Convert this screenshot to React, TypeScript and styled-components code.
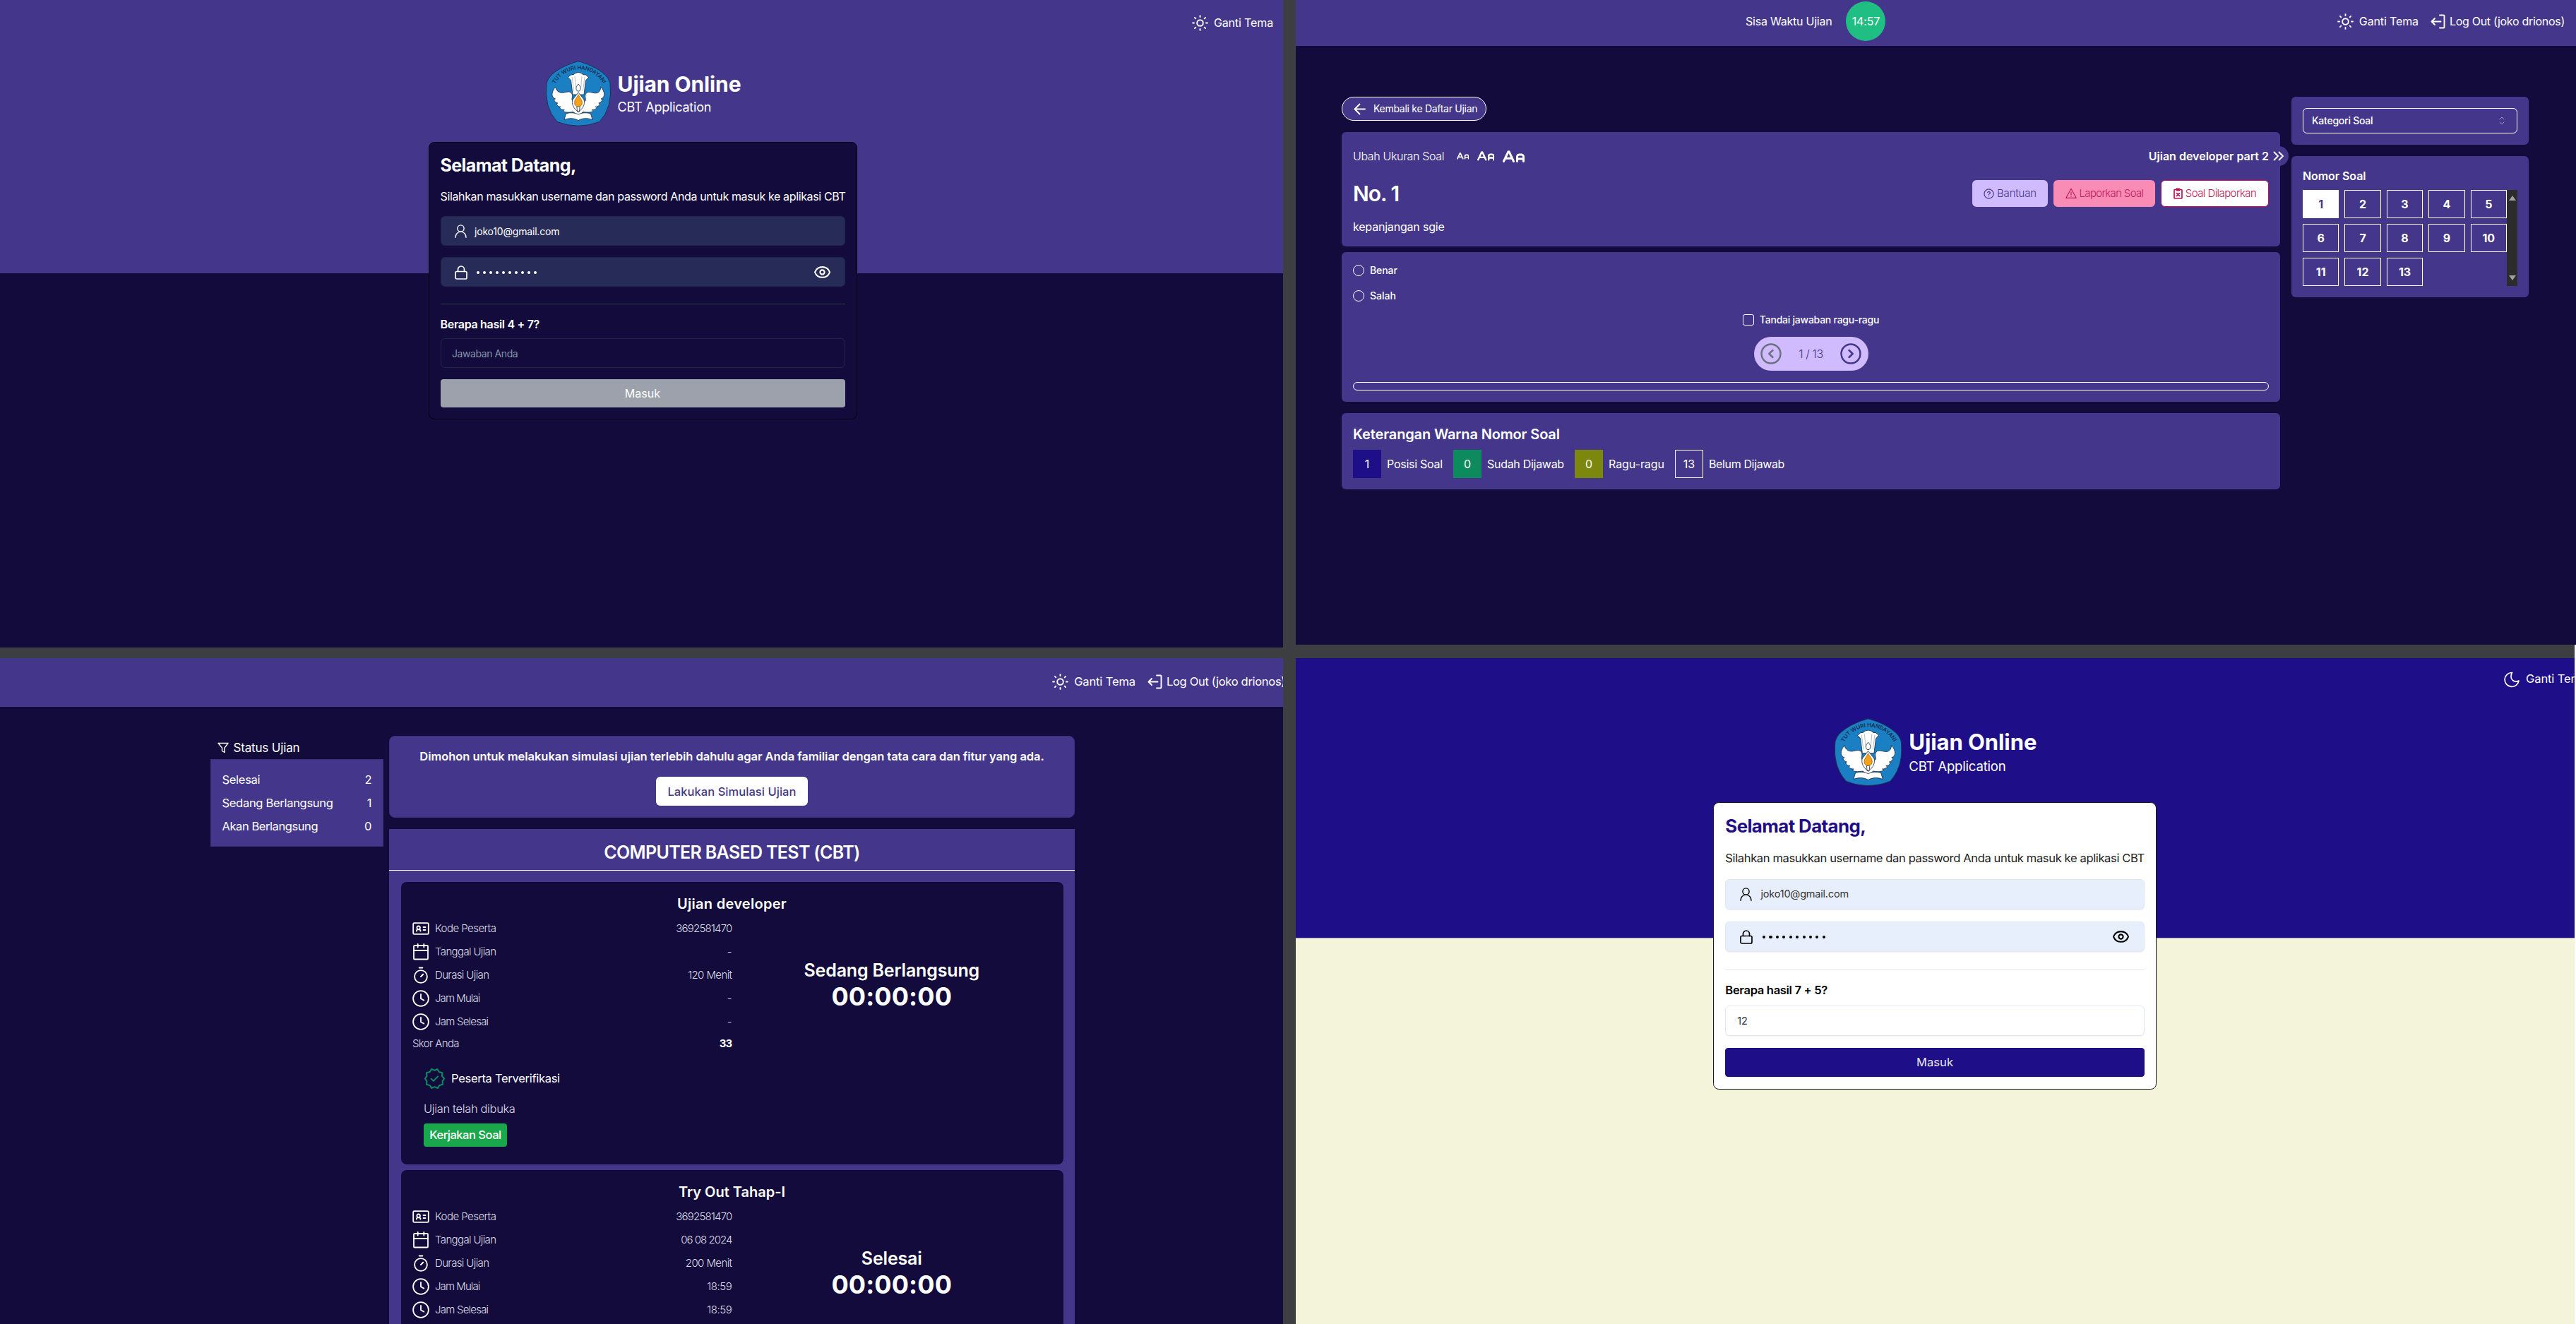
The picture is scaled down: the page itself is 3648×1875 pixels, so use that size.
import React from 'react';
import styled, { createGlobalStyle, css } from 'styled-components';

const INDIGO = '#44378b';
const NIGHT = '#120b3c';
const ROYAL = '#1e0e87';
const LILAC = '#d0bbfe';
const CREAM = '#f4f4db';

const GlobalStyle = createGlobalStyle`
  *, *::before, *::after { box-sizing: border-box; }
  body { margin: 0; background: #3d3e41; }
  #root { font-family: Inter, "Noto Sans", sans-serif; color: #fff; }
  button { font: inherit; border: 0; margin: 0; padding: 0; color: inherit; }
`;

/* ---------- shell ---------- */

const Board = styled.main`
  display: flex;
  gap: 18px;
  width: 3648px;
  height: 1875px;
  overflow: hidden;
  background: #3d3e41;
`;

const Column = styled.div<{ $width: number }>`
  display: flex;
  flex-direction: column;
  flex: none;
  width: ${(p) => p.$width}px;
`;

const Divider = styled.div<{ $height: number; $edge?: boolean }>`
  flex: none;
  height: ${(p) => p.$height}px;
  ${(p) => p.$edge && css`border-right: 2px solid #fff;`}
`;

const Screen = styled.section<{ $height: number }>`
  flex: none;
  height: ${(p) => p.$height}px;
  overflow: hidden;
  background: ${NIGHT};
`;

const Text = styled.span<{
  $size?: number;
  $weight?: number;
  $ls?: number;
  $lh?: number;
  $color?: string;
}>`
  display: block;
  white-space: nowrap;
  font-size: ${(p) => p.$size ?? 16}px;
  font-weight: ${(p) => p.$weight ?? 400};
  letter-spacing: ${(p) => p.$ls ?? 0}em;
  line-height: ${(p) => p.$lh ?? 24}px;
  color: ${(p) => p.$color ?? 'inherit'};
`;

/* ---------- icons ---------- */

type IconProps = {
  w: number;
  h?: number;
  box?: string;
  stroke?: number;
  color?: string;
  children: React.ReactNode;
};

const Glyph = styled.svg`
  display: block;
  flex: none;
`;

const Icon = ({ w, h = w, box = '0 0 24 24', stroke = 1.7, color = 'currentColor', children }: IconProps) => (
  <Glyph
    width={w}
    height={h}
    viewBox={box}
    fill="none"
    stroke={color}
    strokeWidth={stroke}
    strokeLinecap="round"
    strokeLinejoin="round"
  >
    {children}
  </Glyph>
);

const SunIcon = () => (
  <Icon w={23} box="-11.5 -11.5 23 23" stroke={1.9}>
    <circle r="4.3" />
    <path d="M0-10.4v1.9M0 8.5v1.9M-10.4 0h1.9M8.5 0h1.9M-7.6-7.6l1.4 1.4M6.2 6.2l1.4 1.4M-7.6 7.6l1.4-1.4M6.2-6.2l1.4-1.4" />
  </Icon>
);

const MoonIcon = () => (
  <Icon w={24} stroke={1.7}>
    <path d="M12.5 2.5A10 10 0 1 0 22 14c-1.2.8-2.6 1.2-4 1.2a7 7 0 0 1-7-7c0-2.1.5-4.1 1.5-5.7z" />
  </Icon>
);

const LogoutIcon = () => (
  <Icon w={21} box="0 0 21 21" stroke={1.9}>
    <path d="M13 1.5h5.5a1 1 0 0 1 1 1v16a1 1 0 0 1-1 1H13M14.5 10.5H1.5M6 6l-4.5 4.5L6 15" />
  </Icon>
);

const UserIcon = () => (
  <Icon w={17} h={19} box="0 0 17 19" stroke={1.4}>
    <circle cx="8.5" cy="5.5" r="4.6" />
    <path d="M1 18.2c0-4.5 3.2-8.1 7.5-8.1s7.5 3.6 7.5 8.1" />
  </Icon>
);

const LockIcon = () => (
  <Icon w={18} h={20} box="0 0 18 20" stroke={1.7}>
    <rect x="1" y="8.5" width="16" height="10.5" rx="1.8" />
    <path d="M4.5 8.3V5.5a4.5 4.5 0 0 1 9 0v2.8" />
  </Icon>
);

const EyeIcon = () => (
  <Icon w={25} stroke={2}>
    <path d="M2.1 12.3a1 1 0 0 1 0-.7 10.75 10.75 0 0 1 19.9 0 1 1 0 0 1 0 .7 10.75 10.75 0 0 1-19.9 0" />
    <circle cx="12" cy="12" r="3" />
  </Icon>
);

const CardIdIcon = () => (
  <Icon w={24} stroke={1.8}>
    <rect x="1.2" y="4.2" width="21.6" height="15.6" rx="1.6" />
    <path d="M6 15.6v-1.2l1.7-1.5a2.3 2.3 0 1 1 2 0l1.7 1.5v1.2M7.2 13.4h3" strokeWidth="1.9" />
    <path d="M15.5 10h3M15.5 14h3" />
  </Icon>
);

const CalendarIcon = () => (
  <Icon w={24} stroke={1.8}>
    <rect x="2" y="3" width="20" height="19.5" rx="1.3" />
    <path d="M2 10h20M7.7 1v4.5M16.3 1v4.5" />
  </Icon>
);

const StopwatchIcon = () => (
  <Icon w={24} stroke={1.8}>
    <circle cx="12" cy="14" r="8.9" />
    <path d="M9.7 1.6h4.6M12 14l3.2-3.2" strokeWidth="2" />
  </Icon>
);

const ClockIcon = () => (
  <Icon w={24} stroke={1.8}>
    <circle cx="12" cy="12" r="10.9" />
    <path d="M12 6v6.2l4.3 2.4" />
  </Icon>
);

const VerifiedIcon = () => (
  <Icon w={31} stroke={1.6} color="#0e8a5f">
    <path d="M22.5 12l-2.44-2.78.34-3.68-3.61-.82-1.89-3.18L12 3 8.6 1.54 6.71 4.72l-3.61.81.34 3.68L1.5 12l1.94 2.78-.34 3.69 3.61.82 1.89 3.18L12 21l3.4 1.46 1.89-3.18 3.61-.82-.34-3.68L22.5 12z" />
    <path d="M8.3 12.2l2.4 2.4 4.9-5" />
  </Icon>
);

const FunnelIcon = () => (
  <Icon w={16} box="0 0 16 16" stroke={1.4}>
    <path d="M1 1.5h14l-5 6.6v6.4l-3.5-2V8.1z" />
  </Icon>
);

const ArrowLeftIcon = () => (
  <Icon w={17} box="0 0 17 17" stroke={1.9}>
    <path d="M16 8.5H1.5M8.5 1.5l-7 7 7 7" />
  </Icon>
);

const ChevronsIcon = () => (
  <Icon w={16} h={14} box="0 0 16 14" stroke={1.8}>
    <path d="M1.5 1.5L7 7l-5.5 5.5M8.5 1.5L14 7l-5.5 5.5" />
  </Icon>
);

const HelpIcon = () => (
  <Icon w={15} stroke={1.9}>
    <circle cx="12" cy="12" r="10.5" />
    <path d="M9.09 9a3 3 0 0 1 5.83 1c0 2-3 2.5-3 4M12 17.5h.01" />
  </Icon>
);

const WarningIcon = () => (
  <Icon w={16} stroke={1.7}>
    <path d="M12 2L1.2 21.5h21.6zM12 9v6.5M12 18.5h.01" />
  </Icon>
);

const ClipboardXIcon = () => (
  <Icon w={13} h={16} box="0 0 13 16" stroke={1.7}>
    <rect x="1" y="2.5" width="11" height="12.5" rx="1" />
    <rect x="4" y="1" width="5" height="3" rx=".6" fill="currentColor" strokeWidth="1" />
    <path d="M4.6 7.6l3.8 3.8M8.4 7.6l-3.8 3.8" />
  </Icon>
);

const ChevronCircle = ({ dir, color }: { dir: 'left' | 'right'; color: string }) => (
  <Icon w={30} box="0 0 30 30" stroke={2.5} color={color}>
    <circle cx="15" cy="15" r="13.5" />
    <path d={dir === 'left' ? 'M17.5 10L12.3 15l5.2 5' : 'M12.5 10l5.2 5-5.2 5'} />
  </Icon>
);

const SelectChevrons = () => (
  <Icon w={8} h={12} box="0 0 8 12" stroke={1} color="#a59ccb">
    <path d="M1 4l3-3 3 3M1 8l3 3 3-3" />
  </Icon>
);

const LetterSizeIcon = ({ width }: { width: number }) => (
  <Icon w={width} h={(width * 17) / 31} box="0 0 31 17" stroke={3}>
    <path d="M1.5 15.5L8 1.7h1l6.5 13.8M4 11.3h9" />
    <path d="M20.5 15.5V9a3 3 0 0 1 3-3h3a3 3 0 0 1 3 3v6.5M20.5 12h9" />
  </Icon>
);

/* Emblem of the ministry: blue shield, white bird, torch and open book */
const Emblem = ({ size, id }: { size: number; id: string }) => (
  <Glyph width={size} height={(size * 93) / 92} viewBox="0 0 92 93">
    <path
      d="M46 .7C58 4 73 10 84 20Q89 25 91 31.5Q95 66 76 86.5Q46 98 16 86.5Q-3 66 1 31.5Q3 25 8 20C19 10 34 4 46 .7Z"
      fill="#1b7fc4"
      stroke="#1c2f55"
      strokeWidth="1"
    />
    <path id={id} d="M13.2 33A38 38 0 0 1 81.5 34" fill="none" />
    <text fontSize="7.6" fontFamily="Inter, sans-serif" fontWeight="500" fill="#10243f">
      <textPath href={`#${id}`} textLength="83" startOffset="0">
        TUT WURI HANDAYANI
      </textPath>
    </text>
    <g fill="#fff" stroke="#17293f" strokeWidth=".8" strokeLinejoin="round">
      <path d="M31.5 23.5l4-3.5 3.5-.3 3-2.2 4-1 4 1 3 2.2 3.5.3 4 3.5-4 4.5L54 48H38L35.5 28z" />
      <path d="M13.8 37C11 40 8.5 45 9 49c.8 3 2.6 4.3 4.6 5-1 .7-1.5.5-2.3.5 1 3.5 3 5 5.5 5.5l-2 .8c1.5 3.2 3.5 4.5 6.5 4.5l-2 1.2c2 2.5 4 3.3 7 3l-2 1.8c4 2.5 9 1.8 14.5 1.2l7 5.5 7-5.5c5.5.6 10.5 1.3 14.5-1.2l-2-1.8c3 .3 5-.5 7-3l-2-1.2c3 0 5-1.3 6.5-4.5l-2-.8c2.5-.5 4.5-2 5.5-5.5-.8 0-1.3.2-2.3-.5 2-.7 3.8-2 4.6-5 .5-4-2-9-4.8-12-.3 4.5-1.5 7.5-5.5 8.7-4 .8-8-1.5-11.5-1.2-3.5.3-5.5 3-5 7 .3 2 1 4 0 5.5L46 60l-8.5-3.5c-1-1.5-.3-3.5 0-5.5.5-4-1.5-6.7-5-7-3.5-.3-7.5 2-11.5 1.2-4-1.2-6.9-3.7-7.2-8.2z" />
      <path d="M46 45l-8 10c-2 6 1 12 8 18 7-6 10-12 8-18z" />
      <path d="M26 83.5l2.5-8.5c6-2 12-1.5 17.5 1 5.5-2.5 11.5-3 17.5-1l2.5 8.5c-7-2.5-14-2.5-20 1-6-3.5-13-3.5-20-1z" />
      <path d="M46 33c-3.5 4-4 7-1.5 10h3c2.5-3 2-6-1.5-10z" />
      <path d="M43.8 65h4.4l-.8 7h-2.8z" />
    </g>
    <path d="M41 22l1.5 18M51 22l-1.5 18M37 23l2.5 20M55 23l-2.5 20" stroke="#8b97a6" strokeWidth=".6" />
    <path
      d="M46 48c-1.5 4-5.5 7-5.5 11.5 0 3.5 2.5 5.5 5.5 5.5s5.5-2 5.5-5.5C51.5 55 47.5 52 46 48z"
      fill="#f3a21a"
      stroke="#9a5a10"
      strokeWidth=".7"
    />
  </Glyph>
);

/* ---------- top bars ---------- */

const TopBar = styled.header<{ $height: number; $lift?: number }>`
  display: flex;
  align-items: center;
  height: ${(p) => p.$height}px;
  padding-bottom: ${(p) => p.$lift ?? 0}px;
  background: ${INDIGO};
`;

const Actions = styled.div<{ $right: number; $gap?: number }>`
  display: flex;
  align-items: center;
  gap: ${(p) => p.$gap ?? 17}px;
  margin-left: auto;
  margin-right: ${(p) => p.$right}px;
`;

const Action = styled.a<{ $gap: number }>`
  display: flex;
  align-items: center;
  gap: ${(p) => p.$gap}px;
`;

const Timer = styled.div`
  display: flex;
  align-items: center;
  gap: 20px;
  margin-left: 637px;
`;

const TimerBadge = styled.div`
  display: flex;
  align-items: center;
  justify-content: center;
  width: 56px;
  height: 56px;
  border-radius: 50%;
  background: #1fbf83;
`;

const SessionActions = ({ right, size }: { right: number; size: number }) => (
  <Actions $right={right}>
    <Action $gap={8}>
      <SunIcon />
      <Text $size={size} $ls={-0.008}>Ganti Tema</Text>
    </Action>
    <Action $gap={6}>
      <LogoutIcon />
      <Text $size={size} $ls={-0.0185}>Log Out (joko drionos)</Text>
    </Action>
  </Actions>
);

/* ---------- login ---------- */

/* Every length of the login screen is a multiple of --u, its zoom level. */
const u = (n: number) => `calc(var(--u) * ${n}px)`;

const LoginScreen = styled.section<{ $zoom: number; $light?: boolean; $height: number; $band: number; $shift: number }>`
  --u: ${(p) => p.$zoom};
  display: flex;
  flex-direction: column;
  align-items: center;
  flex: none;
  height: ${(p) => p.$height}px;
  overflow: hidden;
  padding-left: ${(p) => Math.max(0, p.$shift)}px;
  padding-right: ${(p) => Math.max(0, -p.$shift)}px;
  background: ${(p) =>
    p.$light
      ? `linear-gradient(${ROYAL} ${p.$band}px, #a9a4c4 ${p.$band}px, #a9a4c4 ${p.$band + 1}px, ${CREAM} ${p.$band + 1}px)`
      : `linear-gradient(${INDIGO} ${p.$band}px, ${NIGHT} ${p.$band}px)`};
  ${(p) => p.$light && css`border-right: 2px solid #fff;`}
`;

const LoginBar = styled.header<{ $height: number; $lift: number }>`
  display: flex;
  align-items: center;
  flex: none;
  align-self: stretch;
  height: ${(p) => p.$height}px;
  padding-bottom: ${(p) => p.$lift}px;
`;

const LoginText = styled.span<{ $size: number; $weight?: number; $ls?: number; $lh?: number; $color?: string }>`
  display: block;
  white-space: nowrap;
  font-size: ${(p) => u(p.$size)};
  font-weight: ${(p) => p.$weight ?? 400};
  letter-spacing: ${(p) => p.$ls ?? 0}em;
  line-height: ${(p) => u(p.$lh ?? 24)};
  color: ${(p) => p.$color ?? 'inherit'};
`;

const Brand = styled.div`
  display: flex;
  align-items: center;
  flex: none;
  gap: ${u(10)};
  height: ${u(93)};
  margin-top: ${u(22)};
  padding-left: 2px;
`;

const BrandName = styled.div`
  padding-top: ${u(2)};
`;

const LoginCard = styled.form<{ $light?: boolean }>`
  display: flex;
  flex-direction: column;
  flex: none;
  width: ${u(607)};
  height: ${u(393)};
  margin-top: ${u(22)};
  padding: ${u(16)};
  border: 1px solid ${(p) => (p.$light ? '#15151c' : '#04020f')};
  border-radius: ${u(8)};
  background: ${(p) => (p.$light ? '#fff' : NIGHT)};
  color: ${(p) => (p.$light ? '#000' : '#fff')};
`;

const Field = styled.label<{ $light?: boolean; $filled?: boolean; $top: number }>`
  display: flex;
  align-items: center;
  flex: none;
  height: ${u(41.7)};
  margin-top: ${(p) => u(p.$top)};
  padding: 1px ${(p) => (p.$filled ? u(19) : u(15.5))} 0;
  border: 1px solid ${(p) => (p.$light ? '#e0e7f3' : '#1f2745')};
  border-radius: ${u(6)};
  background: ${(p) => (p.$filled ? (p.$light ? '#e8effc' : '#262b57') : 'transparent')};
  box-shadow: ${(p) => (p.$light ? '0 1px 2px rgba(0, 0, 0, 0.06)' : 'none')};
`;

const FieldIcon = styled.span`
  display: flex;
  width: ${u(28.5)};
`;

const Dots = styled.span`
  display: flex;
  gap: ${u(5.1)};
  padding-left: ${u(2.5)};
`;

const Dot = styled.i`
  width: ${u(4)};
  height: ${u(4)};
  border-radius: 50%;
  background: currentColor;
`;

const Reveal = styled.span`
  margin-left: auto;
`;

const Rule = styled.hr<{ $light?: boolean }>`
  flex: none;
  width: 100%;
  height: 1px;
  margin: ${u(24)} 0 ${u(16)};
  border: 0;
  background: ${(p) => (p.$light ? '#e2e4ea' : '#343f4e')};
`;

const Gap = styled.div<{ $h: number }>`
  flex: none;
  height: ${(p) => u(p.$h)};
`;

const Submit = styled.button<{ $light?: boolean }>`
  display: flex;
  align-items: center;
  justify-content: center;
  flex: none;
  height: ${u(40)};
  margin-top: ${u(16)};
  padding-top: 1px;
  border-radius: ${u(4)};
  background: ${(p) => (p.$light ? ROYAL : '#9ca1ac')};
  color: ${(p) => (p.$light ? '#e9e7f3' : '#fff')};
`;

type LoginProps = {
  light?: boolean;
  zoom: number;
  height: number;
  band: number;
  shift: number;
  question: string;
  answer?: string;
};

const Login = ({ light, zoom, height, band, shift, question, answer }: LoginProps) => (
  <LoginScreen $light={light} $zoom={zoom} $height={height} $band={band} $shift={shift}>
    <LoginBar $height={light ? 62 : 64} $lift={light ? 3 : 0}>
      <Actions $right={light ? -19 : 14}>
        <Action $gap={8}>
          {light ? <MoonIcon /> : <SunIcon />}
          <LoginText $size={16} $ls={-0.008}>Ganti Tema</LoginText>
        </Action>
      </Actions>
    </LoginBar>
    <Brand>
      <Emblem size={92 * zoom} id={light ? 'motto-light' : 'motto-dark'} />
      <BrandName>
        <LoginText $size={30} $weight={700} $ls={-0.003} $lh={36}>Ujian Online</LoginText>
        <LoginText $size={18} $ls={-0.0126} $lh={29}>CBT Application</LoginText>
      </BrandName>
    </Brand>
    <LoginCard $light={light}>
      <LoginText $size={25} $weight={700} $ls={-0.0234} $lh={32} $color={light ? ROYAL : undefined}>
        Selamat Datang,
      </LoginText>
      <Gap $h={16} />
      <LoginText $size={16} $ls={-0.0228} $color={light ? '#222' : undefined}>
        Silahkan masukkan username dan password Anda untuk masuk ke aplikasi CBT
      </LoginText>
      <Field $light={light} $filled $top={16.3}>
        <FieldIcon><UserIcon /></FieldIcon>
        <LoginText $size={14} $ls={-0.0136} $color={light ? '#333' : undefined}>joko10@gmail.com</LoginText>
      </Field>
      <Field $light={light} $filled $top={16.3}>
        <FieldIcon><LockIcon /></FieldIcon>
        <Dots>
          {Array.from({ length: 10 }, (_, i) => <Dot key={i} />)}
        </Dots>
        <Reveal><EyeIcon /></Reveal>
      </Field>
      <Rule $light={light} />
      <LoginText $size={16} $weight={600} $ls={-0.0194} $lh={24.3}>{question}</LoginText>
      <Field $light={light} $top={8}>
        <LoginText $size={14} $ls={answer ? -0.02 : -0.0302} $color={answer ? '#333' : '#8593ab'}>
          {answer ?? 'Jawaban Anda'}
        </LoginText>
      </Field>
      <Submit $light={light} type="button">
        <LoginText $size={16} $ls={0.004}>Masuk</LoginText>
      </Submit>
    </LoginCard>
  </LoginScreen>
);

/* ---------- question screen ---------- */

const QuestionLayout = styled.div`
  display: grid;
  grid-template-columns: 1329px 336px;
  column-gap: 16px;
  align-items: start;
  padding: 72px 0 0 65px;
`;

const Stack = styled.div`
  display: flex;
  flex-direction: column;
  align-items: flex-start;
`;

const BackButton = styled.button`
  display: flex;
  align-items: center;
  gap: 11px;
  width: 205px;
  height: 34px;
  margin-bottom: 16px;
  padding-left: 16px;
  border: 1px solid #fff;
  border-radius: 17px;
  background: ${INDIGO};
`;

const Card = styled.section<{ $height: number; $gap?: number; $pad: string }>`
  position: relative;
  align-self: stretch;
  height: ${(p) => p.$height}px;
  margin-bottom: ${(p) => p.$gap ?? 0}px;
  padding: ${(p) => p.$pad};
  border-radius: 6px;
  background: ${INDIGO};
`;

const Row = styled.div<{ $gap?: number; $height?: number; $top?: number; $center?: boolean }>`
  display: flex;
  align-items: center;
  justify-content: ${(p) => (p.$center ? 'center' : 'flex-start')};
  gap: ${(p) => p.$gap ?? 0}px;
  height: ${(p) => (p.$height ? `${p.$height}px` : 'auto')};
  margin-top: ${(p) => p.$top ?? 0}px;
`;

const SizePicker = styled.div`
  display: flex;
  align-items: center;
  gap: 11.5px;
  margin-left: 17.5px;
`;

const End = styled.div`
  display: flex;
  gap: 8px;
  margin-left: auto;
`;

const CollapseTab = styled.div`
  position: absolute;
  top: 20px;
  right: -12px;
  display: flex;
  align-items: center;
  width: 28px;
  height: 28px;
  padding-left: 6px;
  border-radius: 0 14px 14px 0;
  background: ${INDIGO};
`;

const tones = {
  help: css`background: ${LILAC}; color: ${INDIGO};`,
  report: css`background: #f98cb5; color: #be1a5c;`,
  reported: css`background: #fff; color: #be1250; border: 1px solid #be1250;`,
};

const ToolButton = styled.button<{ $tone: keyof typeof tones; $width: number }>`
  display: flex;
  align-items: center;
  justify-content: center;
  gap: 4px;
  width: ${(p) => p.$width}px;
  height: 38px;
  border-radius: 6px;
  ${(p) => tones[p.$tone]}
`;

const Radio = styled.span`
  width: 16px;
  height: 16px;
  border: 1px solid #fff;
  border-radius: 50%;
`;

const Checkbox = styled.span`
  width: 16px;
  height: 16px;
  border: 1px solid #fff;
  border-radius: 3px;
`;

const Pager = styled.nav`
  display: flex;
  align-items: center;
  justify-content: space-between;
  width: 162px;
  height: 48px;
  margin: 16px auto;
  padding: 0 9px;
  border-radius: 24px;
  background: ${LILAC};
`;

const Progress = styled.div`
  height: 12px;
  border: 1px solid #fff;
  border-radius: 6px;
`;

const Legend = styled.div`
  display: flex;
  gap: 16px;
  margin-top: 8px;
`;

const LegendItem = styled.div<{ $width: number }>`
  display: flex;
  align-items: center;
  gap: 8px;
  width: ${(p) => p.$width}px;
`;

const Swatch = styled.span<{ $bg?: string }>`
  display: flex;
  align-items: center;
  justify-content: center;
  flex: none;
  width: 40px;
  height: 40px;
  border: 1px solid ${(p) => p.$bg ?? '#fff'};
  background: ${(p) => p.$bg ?? 'transparent'};
`;

const Select = styled.div`
  display: flex;
  align-items: center;
  justify-content: space-between;
  height: 36px;
  padding: 0 17px 0 12px;
  border: 1px solid #fff;
  border-radius: 6px;
`;

const NumberArea = styled.div`
  display: flex;
  height: 136px;
  margin-top: 8px;
`;

const NumberGrid = styled.div`
  display: grid;
  grid-template-columns: repeat(5, 1fr);
  grid-auto-rows: 40px;
  gap: 8px;
  flex: 1;
`;

const NumberCell = styled.button<{ $active: boolean }>`
  border: 1px solid #fff;
  background: ${(p) => (p.$active ? '#fff' : 'transparent')};
  color: ${(p) => (p.$active ? INDIGO : '#fff')};
  font-size: 16px;
  font-weight: 700;
`;

const Scrollbar = styled.div`
  display: flex;
  flex-direction: column;
  justify-content: space-between;
  align-items: center;
  width: 15px;
  padding: 8px 0;
  background: #2c2c2c;
`;

const Caret = styled.i<{ $down?: boolean }>`
  border: 5px solid transparent;
  ${(p) =>
    p.$down
      ? css`border-top: 7px solid #9f9f9f; border-bottom: 0;`
      : css`border-bottom: 7px solid #9f9f9f; border-top: 0;`}
`;

const legend = [
  { count: '1', label: 'Posisi Soal', bg: ROYAL, ls: -0.016, width: 126 },
  { count: '0', label: 'Sudah Dijawab', bg: '#0e8a5f', ls: -0.018, width: 156 },
  { count: '0', label: 'Ragu-ragu', bg: '#7b880d', ls: -0.004, width: 126 },
  { count: '13', label: 'Belum Dijawab', ls: -0.023, width: 156 },
];

const Question = () => (
  <Screen $height={913}>
    <TopBar $height={65} $lift={5}>
      <Timer>
        <Text $ls={-0.0142}>Sisa Waktu Ujian</Text>
        <TimerBadge><Text $ls={-0.0099}>14:57</Text></TimerBadge>
      </Timer>
      <SessionActions right={16} size={16} />
    </TopBar>
    <QuestionLayout>
      <Stack>
        <BackButton>
          <ArrowLeftIcon />
          <Text $size={14} $ls={-0.0202}>Kembali ke Daftar Ujian</Text>
        </BackButton>
        <Card $height={162} $gap={8} $pad="20px 16px 16px">
          <Row $height={28}>
            <Text $weight={300} $ls={-0.0215}>Ubah Ukuran Soal</Text>
            <SizePicker>
              <LetterSizeIcon width={17.5} />
              <LetterSizeIcon width={24.5} />
              <LetterSizeIcon width={31} />
            </SizePicker>
            <End><Text $weight={600}>Ujian developer part 2</Text></End>
          </Row>
          <CollapseTab><ChevronsIcon /></CollapseTab>
          <Row $height={38} $top={20}>
            <Text $size={30} $weight={600} $ls={-0.034}>No. 1</Text>
            <End>
              <ToolButton $tone="help" $width={107}>
                <HelpIcon />
                <Text $size={15} $weight={300} $ls={-0.0127}>Bantuan</Text>
              </ToolButton>
              <ToolButton $tone="report" $width={144}>
                <WarningIcon />
                <Text $size={15} $weight={300} $ls={-0.0451}>Laporkan Soal</Text>
              </ToolButton>
              <ToolButton $tone="reported" $width={153}>
                <ClipboardXIcon />
                <Text $size={15} $weight={300} $ls={-0.0383}>Soal Dilaporkan</Text>
              </ToolButton>
            </End>
          </Row>
          <Row $top={16}><Text $ls={-0.012}>kepanjangan sgie</Text></Row>
        </Card>
        <Card $height={212} $gap={16} $pad="18px 16px 16px">
          <Row $gap={8} $height={16}>
            <Radio />
            <Text $size={14} $weight={500} $ls={-0.0066}>Benar</Text>
          </Row>
          <Row $gap={8} $height={16} $top={20}>
            <Radio />
            <Text $size={14} $weight={500}>Salah</Text>
          </Row>
          <Row $gap={8} $height={16} $top={18} $center>
            <Checkbox />
            <Text $size={14} $weight={500} $ls={-0.0171}>Tandai jawaban ragu-ragu</Text>
          </Row>
          <Pager>
            <ChevronCircle dir="left" color="#6b7280" />
            <Text $weight={300} $ls={-0.0252} $color={INDIGO}>1 / 13</Text>
            <ChevronCircle dir="right" color={INDIGO} />
          </Pager>
          <Progress />
        </Card>
        <Card $height={108} $pad="16px">
          <Text $size={20} $weight={600} $ls={-0.0075} $lh={28}>Keterangan Warna Nomor Soal</Text>
          <Legend>
            {legend.map((item) => (
              <LegendItem key={item.label} $width={item.width}>
                <Swatch $bg={item.bg}><Text>{item.count}</Text></Swatch>
                <Text $ls={item.ls}>{item.label}</Text>
              </LegendItem>
            ))}
          </Legend>
        </Card>
      </Stack>
      <Stack>
        <Card $height={68} $gap={16} $pad="16px">
          <Select>
            <Text $size={14} $weight={500} $ls={-0.018}>Kategori Soal</Text>
            <SelectChevrons />
          </Select>
        </Card>
        <Card $height={200} $pad="16px">
          <Text $weight={600} $ls={-0.0042}>Nomor Soal</Text>
          <NumberArea>
            <NumberGrid>
              {Array.from({ length: 13 }, (_, i) => (
                <NumberCell key={i} $active={i === 0}>{i + 1}</NumberCell>
              ))}
            </NumberGrid>
            <Scrollbar>
              <Caret />
              <Caret $down />
            </Scrollbar>
          </NumberArea>
        </Card>
      </Stack>
    </QuestionLayout>
  </Screen>
);

/* ---------- exam list ---------- */

const ExamLayout = styled.div`
  display: grid;
  grid-template-columns: 245px 971px;
  column-gap: 8px;
  align-items: start;
  padding: 41px 0 0 298px;
`;

const StatusTitle = styled.h2`
  display: flex;
  align-items: center;
  gap: 7px;
  height: 33px;
  margin: 0;
  padding-left: 9.5px;
`;

const StatusBox = styled.ul`
  height: 124px;
  margin: 0;
  padding: 11.5px 15.5px;
  list-style: none;
  border: 1px solid #3a2f7b;
  background: ${INDIGO};
`;

const StatusItem = styled.li`
  display: flex;
  align-items: center;
  justify-content: space-between;
  height: 33px;
`;

const Notice = styled.section`
  display: flex;
  flex-direction: column;
  align-items: center;
  height: 116px;
  margin-bottom: 16px;
  padding-top: 15.5px;
  border: 1px solid #3a2f7b;
  border-radius: 8px;
  background: ${INDIGO};
`;

const NoticeButton = styled.button`
  display: flex;
  align-items: center;
  justify-content: center;
  width: 215.5px;
  height: 41px;
  margin-top: 16.5px;
  border-radius: 6px;
  background: #fff;
  color: ${INDIGO};
`;

const ExamSection = styled.section`
  background: ${INDIGO};
`;

const SectionTitle = styled.h1`
  display: flex;
  justify-content: center;
  height: 59px;
  margin: 0;
  padding-top: 8px;
  border-bottom: 1px solid #fff;
`;

const ExamList = styled.div`
  display: flex;
  flex-direction: column;
  gap: 8px;
  padding: 16px 16.5px 0;
`;

const ExamCard = styled.article`
  height: 400px;
  padding: 17px 16.5px;
  border-radius: 8px;
  background: ${NIGHT};
`;

const ExamName = styled.div`
  display: flex;
  justify-content: center;
`;

const ExamBody = styled.div`
  display: grid;
  grid-template-columns: 1fr 1fr;
  padding-top: 4.5px;
`;

const Detail = styled.div<{ $height?: number }>`
  display: flex;
  align-items: center;
  gap: 8px;
  height: ${(p) => p.$height ?? 33}px;
  color: #dddbe8;
`;

const DetailIcon = styled.span`
  color: #fff;
`;

const DetailValue = styled.div`
  margin-left: auto;
`;

const Countdown = styled.div`
  display: flex;
  flex-direction: column;
  align-items: center;
  padding-top: 57.5px;
`;

const Verified = styled.div`
  display: flex;
  align-items: center;
  gap: 8.5px;
  height: 29px;
  margin: 20px 0 16.5px 15.5px;
`;

const Opened = styled.div`
  padding-left: 16px;
`;

const WorkButton = styled.button`
  display: flex;
  align-items: center;
  justify-content: center;
  width: 118px;
  height: 33px;
  margin-top: 8.5px;
  border-radius: 4px;
  background: #1aa64b;
`;

const statuses = [
  { label: 'Selesai', count: 2, ls: -0.018 },
  { label: 'Sedang Berlangsung', count: 1, ls: -0.018 },
  { label: 'Akan Berlangsung', count: 0, ls: -0.026 },
];

const fields = [
  { label: 'Kode Peserta', ls: -0.0362, icon: <CardIdIcon /> },
  { label: 'Tanggal Ujian', ls: -0.0427, icon: <CalendarIcon /> },
  { label: 'Durasi Ujian', ls: -0.0416, icon: <StopwatchIcon /> },
  { label: 'Jam Mulai', ls: -0.0614, icon: <ClockIcon /> },
  { label: 'Jam Selesai', ls: -0.0519, icon: <ClockIcon /> },
];

type Exam = {
  name: string;
  nameLs: number;
  status: string;
  values: [string, number][];
  score?: string;
};

const exams: Exam[] = [
  {
    name: 'Ujian developer',
    nameLs: 0.0145,
    status: 'Sedang Berlangsung',
    values: [['3692581470', -0.0523], ['-', 0], ['120 Menit', -0.039], ['-', 0], ['-', 0]],
    score: '33',
  },
  {
    name: 'Try Out Tahap-I',
    nameLs: 0,
    status: 'Selesai',
    values: [['3692581470', -0.0523], ['06 08 2024', -0.0646], ['200 Menit', -0.039], ['18:59', -0.0251], ['18:59', -0.0251]],
  },
];

const ExamPanel = ({ exam }: { exam: Exam }) => (
  <ExamCard>
    <ExamName>
      <Text $size={20} $weight={600} $ls={exam.nameLs} $lh={28}>{exam.name}</Text>
    </ExamName>
    <ExamBody>
      <div>
        {fields.map((field, i) => (
          <Detail key={field.label}>
            <DetailIcon>{field.icon}</DetailIcon>
            <Text $size={15} $weight={300} $ls={field.ls}>{field.label}</Text>
            <DetailValue>
              <Text $size={15} $weight={300} $ls={exam.values[i][1]}>{exam.values[i][0]}</Text>
            </DetailValue>
          </Detail>
        ))}
        {exam.score && (
          <Detail $height={29}>
            <Text $size={15} $weight={300} $ls={-0.0438}>Skor Anda</Text>
            <DetailValue>
              <Text $size={15} $weight={700} $ls={-0.05} $color="#fff">{exam.score}</Text>
            </DetailValue>
          </Detail>
        )}
      </div>
      <Countdown>
        <Text $size={25} $weight={600} $ls={-0.007} $lh={37}>{exam.status}</Text>
        <Text $size={36} $weight={700} $ls={0.003} $lh={37}>00:00:00</Text>
      </Countdown>
    </ExamBody>
    {exam.score && (
      <>
        <Verified>
          <VerifiedIcon />
          <Text $size={16.5} $ls={-0.0175}>Peserta Terverifikasi</Text>
        </Verified>
        <Opened>
          <Text $size={16.5} $weight={300} $ls={-0.022} $color="#dddbe8">Ujian telah dibuka</Text>
          <WorkButton><Text $size={16.5} $weight={500} $ls={-0.0294}>Kerjakan Soal</Text></WorkButton>
        </Opened>
      </>
    )}
  </ExamCard>
);

const ExamOverview = () => (
  <Screen $height={943}>
    <TopBar $height={69} $lift={3}>
      <SessionActions right={-3} size={16.5} />
    </TopBar>
    <ExamLayout>
      <aside>
        <StatusTitle>
          <FunnelIcon />
          <Text $size={17} $ls={-0.01}>Status Ujian</Text>
        </StatusTitle>
        <StatusBox>
          {statuses.map((s) => (
            <StatusItem key={s.label}>
              <Text $size={16.5} $ls={s.ls}>{s.label}</Text>
              <Text $size={16.5}>{s.count}</Text>
            </StatusItem>
          ))}
        </StatusBox>
      </aside>
      <div>
        <Notice>
          <Text $size={16.5} $weight={600} $ls={-0.0029} $lh={25}>
            Dimohon untuk melakukan simulasi ujian terlebih dahulu agar Anda familiar dengan tata cara dan fitur yang ada.
          </Text>
          <NoticeButton>
            <Text $size={16.5} $weight={500} $ls={0.003}>Lakukan Simulasi Ujian</Text>
          </NoticeButton>
        </Notice>
        <ExamSection>
          <SectionTitle>
            <Text $size={25} $weight={600} $ls={-0.0265} $lh={50}>COMPUTER BASED TEST (CBT)</Text>
          </SectionTitle>
          <ExamList>
            {exams.map((exam) => <ExamPanel key={exam.name} exam={exam} />)}
          </ExamList>
        </ExamSection>
      </div>
    </ExamLayout>
  </Screen>
);

export default function App() {
  return (
    <>
      <GlobalStyle />
      <Board>
        <Column $width={1817}>
          <Login zoom={1} height={917} band={387} shift={3} question="Berapa hasil 4 + 7?" />
          <Divider $height={15} />
          <ExamOverview />
        </Column>
        <Column $width={1813}>
          <Question />
          <Divider $height={19} $edge />
          <Login light zoom={1.0354} height={943} band={396} shift={-1} question="Berapa hasil 7 + 5?" answer="12" />
        </Column>
      </Board>
    </>
  );
}
